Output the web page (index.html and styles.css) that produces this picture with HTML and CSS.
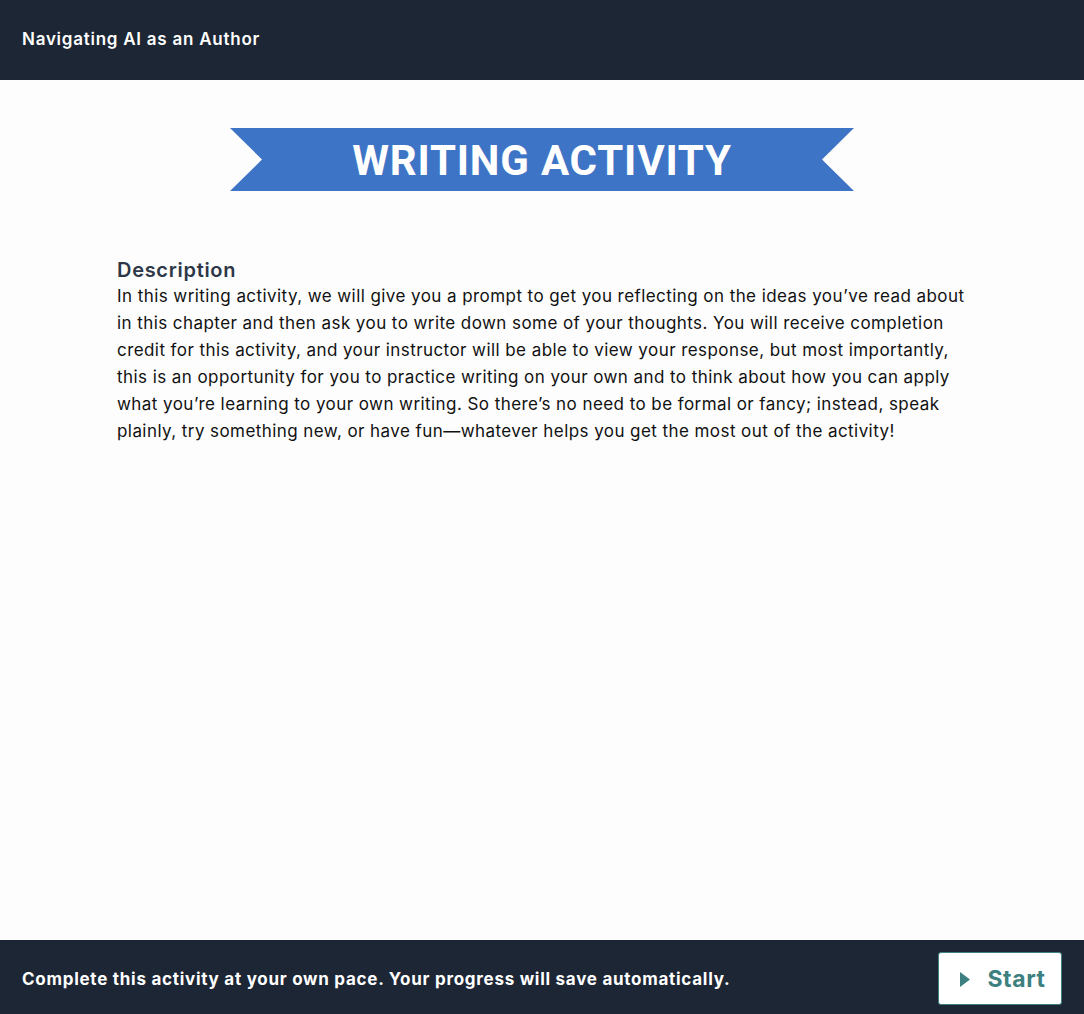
FILE: index.html
```html
<!DOCTYPE html>
<html lang="en">
<head>
<meta charset="utf-8">
<title>Navigating AI as an Author</title>
<link rel="stylesheet" href="styles.css">
</head>
<body>
<div class="page">
  <header class="topbar">
    <h1 class="book-title">Navigating AI as an Author</h1>
  </header>
  <main class="content">
    <div class="banner-wrap">
      <div class="banner">
        <svg class="banner-bg" viewBox="0 0 624 63" preserveAspectRatio="none" aria-hidden="true">
          <polygon points="0,0 624,0 592,31.5 624,63 0,63 32,31.5" fill="#3e74c6"/>
        </svg>
        <span class="banner-text">WRITING ACTIVITY</span>
      </div>
    </div>
    <section class="description">
      <h2 class="desc-heading">Description</h2>
      <p class="desc-body">In this writing activity, we will give you a prompt to get you reflecting on the ideas you’ve read about in this chapter and then ask you to write down some of your thoughts. You will receive completion credit for this activity, and your instructor will be able to view your response, but most importantly, this is an opportunity for you to practice writing on your own and to think about how you can apply what you’re learning to your own writing. So there’s no need to be formal or fancy; instead, speak plainly, try something new, or have fun—whatever helps you get the most out of the activity!</p>
    </section>
  </main>
  <footer class="bottombar">
    <p class="pace-note">Complete this activity at your own pace. Your progress will save automatically.</p>
    <button class="start-btn" type="button">
      <svg class="play-icon" viewBox="0 0 10 15" aria-hidden="true"><polygon points="0,0 10,7.5 0,15" fill="#3d8080"/></svg>
      <span>Start</span>
    </button>
  </footer>
</div>
</body>
</html>
```
FILE: styles.css
```css
* { box-sizing: border-box; }
html, body { margin: 0; padding: 0; height: 100%; }
body {
  font-family: Inter, "Noto Sans", sans-serif;
  background: #fdfdfd;
  color: #111;
}
.page {
  display: flex;
  flex-direction: column;
  height: 1014px;
}
.topbar {
  height: 80px;
  background: #1d2634;
  display: flex;
  align-items: center;
  padding-left: 22px;
  padding-bottom: 2px;
  flex-shrink: 0;
}
.book-title {
  margin: 0;
  color: #fff;
  font-size: 17px;
  font-weight: 600;
  letter-spacing: 0.75px;
}
.content {
  flex: 1;
  padding-top: 48px;
}
.banner-wrap {
  display: flex;
  justify-content: center;
}
.banner {
  position: relative;
  width: 624px;
  height: 63px;
  display: flex;
  align-items: center;
  justify-content: center;
  padding-top: 2px;
}
.banner-bg {
  position: absolute;
  inset: 0;
  width: 100%;
  height: 100%;
}
.banner-text {
  position: relative;
  color: #fff;
  font-family: Roboto, "Liberation Sans", sans-serif;
  font-weight: 700;
  font-size: 42px;
  letter-spacing: 0.8px;
  line-height: 1;
}
.description {
  padding: 66px 117px 0 117px;
}
.desc-heading {
  margin: 0;
  font-size: 20px;
  font-weight: 600;
  color: #2d3748;
  line-height: 26px;
  letter-spacing: 0.7px;
}
.desc-body {
  margin: 0;
  font-size: 17px;
  line-height: 27px;
  color: #111;
  letter-spacing: 0.43px;
  max-width: 860px;
}
.bottombar {
  height: 74px;
  background: #1d2634;
  display: flex;
  align-items: center;
  justify-content: space-between;
  padding: 0 22px;
  flex-shrink: 0;
}
.pace-note {
  margin: 3px 0 0 0;
  color: #fff;
  font-size: 17px;
  font-weight: 700;
  letter-spacing: 0.73px;
}
.start-btn {
  width: 124px;
  height: 53px;
  margin-top: 2px;
  background: #fff;
  border: 1.5px solid #3d8080;
  border-radius: 3px;
  display: flex;
  align-items: center;
  justify-content: center;
  gap: 17px;
  color: #3d8080;
  font-family: Inter, sans-serif;
  font-size: 23px;
  font-weight: 700;
  letter-spacing: 0.6px;
  padding: 2px 0 0 6px;
}
.play-icon {
  width: 10px;
  height: 15px;
}
```
